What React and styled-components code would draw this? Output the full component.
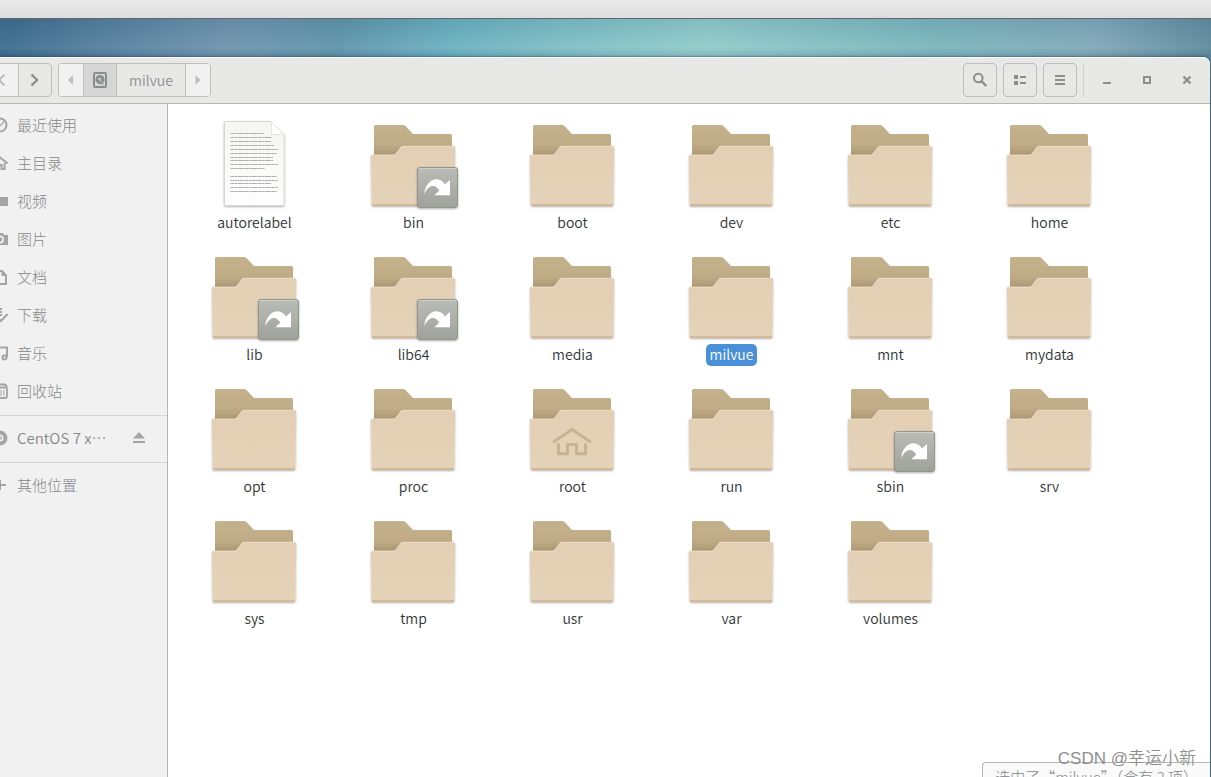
import { useState } from 'react';
import styled, { createGlobalStyle } from 'styled-components';

const GlobalStyle = createGlobalStyle`
  * {
    box-sizing: border-box;
  }

  body {
    margin: 0;
    font-family: 'Noto Sans CJK SC', 'Noto Sans', sans-serif;
    font-size: 14px;
    font-weight: 350;
    line-height: 22px;
    color: #2e3436;
  }

  button {
    padding: 0;
    border: 0;
    background: none;
    color: inherit;
    font: inherit;
  }
`;

const Desktop = styled.div`
  position: relative;
  display: flex;
  flex-direction: column;
  height: 100vh;
  overflow: hidden;
  background: #507b92;
`;

const TopPanel = styled.div`
  flex: none;
  height: 19px;
  border-bottom: 1px solid #666;
  background: linear-gradient(#e9e9e9, #dedede);
`;

const Wallpaper = styled.div`
  flex: 1;
  display: flex;
  min-height: 0;
  padding: 38px 1px 0 0;
  background:
    linear-gradient(rgba(40, 80, 120, 0.12), rgba(255, 255, 255, 0.06) 75%, rgba(30, 60, 90, 0.12)) top / 100% 38px
      no-repeat,
    linear-gradient(
        100deg,
        #396a8b,
        #557f9d 9%,
        #6e93ad 19%,
        #5e94ab 28%,
        #69b0bf 37%,
        #7cbec3 46%,
        #90cbca 58%,
        #7ab6bb 76%,
        #80a8b8 90%,
        #5d889b
      )
      top / 100% 60px no-repeat;
`;

const Window = styled.main`
  flex: 1;
  display: flex;
  flex-direction: column;
  min-width: 0;
  margin-left: -22px;
  border-radius: 0 7px 0 0;
  background: #fff;
  box-shadow: 0 0 2px 1px rgba(20, 50, 80, 0.4);
  overflow: hidden;
`;

const HeaderBar = styled.header`
  flex: none;
  display: flex;
  align-items: center;
  gap: 6px;
  height: 47px;
  padding: 0 6px;
  border-bottom: 1px solid #b6b6b3;
  background: #e8e8e7;
  box-shadow: inset 0 1px #fff;
  color: #8b8e8f;
`;

const ButtonGroup = styled.div`
  display: flex;
  height: 34px;
  border: 1px solid #bebebb;
  border-radius: 4px;
  overflow: hidden;
`;

const GroupButton = styled.button`
  display: flex;
  align-items: center;
  justify-content: center;
  width: ${(p) => p.$width};
  background: ${(p) => p.$bg || 'transparent'};
  color: ${(p) => (p.$dim ? '#bcbebd' : 'inherit')};

  & + & {
    border-left: 1px solid #bebebb;
  }
`;

const Spacer = styled.div`
  flex: 1;
`;

const ToolButton = styled.button`
  display: flex;
  align-items: center;
  justify-content: center;
  width: 34px;
  height: 34px;
  border: 1px solid #bebebb;
  border-radius: 4px;
`;

const WindowControls = styled.div`
  display: flex;
  gap: 6px;
  height: 34px;
  border-left: 1px solid #d0d0ce;
  padding-left: 6px;
`;

const ControlButton = styled.button`
  display: flex;
  align-items: center;
  justify-content: center;
  width: 34px;
`;

const Tools = styled.div`
  display: flex;
  gap: 6px;
`;

const Body = styled.div`
  flex: 1;
  display: flex;
  min-height: 0;
`;

const Sidebar = styled.nav`
  flex: none;
  width: 190px;
  padding-top: 2px;
  border-right: 1px solid #b6b6b3;
  background: #f1f1f1;
  color: #858889;
  font-size: 15px;
  font-weight: 300;
`;

const Place = styled.div`
  display: flex;
  align-items: center;
  height: 38px;
  padding: 0 20px 0 14px;

  svg {
    color: #a3a5a5;
  }
`;

const PlaceLink = styled.a`
  flex: 1;
  display: flex;
  align-items: center;
  gap: 9px;
  color: inherit;
  text-decoration: none;
`;

const DeviceName = styled.span`
  font-weight: 350;
`;

const EjectButton = styled.button`
  display: flex;
`;

const Separator = styled.hr`
  height: 1px;
  margin: 5px 0 3px;
  border: 0;
  background: #d6d6d4;
`;

const Files = styled.ul`
  flex: 1;
  display: grid;
  grid-template-columns: repeat(auto-fill, 159px);
  align-content: start;
  row-gap: 14px;
  margin: 0;
  padding: 12px 7px 0;
  list-style: none;
`;

const FileButton = styled.button`
  display: flex;
  flex-direction: column;
  align-items: center;
  width: 100%;
`;

const FileName = styled.span`
  padding: 0 4px 2px;
  border-radius: 5px;
  background: ${(p) => (p.$selected ? '#4a90d9' : 'transparent')};
  color: ${(p) => (p.$selected ? '#fff' : 'inherit')};
  line-height: 20px;
`;

const StatusBar = styled.div`
  position: absolute;
  right: 1px;
  bottom: -15px;
  padding: 3px 12px;
  border: 1px solid #b6b6b3;
  border-right: 0;
  border-radius: 4px 0 0 0;
  background: #fafafa;
  color: #858889;
  font-size: 15px;
  font-weight: 300;
  white-space: nowrap;
`;

const Watermark = styled.div`
  position: absolute;
  right: 15px;
  bottom: 6px;
  color: #8f8f8f;
  font-family: 'Liberation Sans', 'Noto Sans CJK SC', sans-serif;
  font-size: 17px;
  line-height: 24px;
`;

const Icon = ({ children, size = 16 }) => (
  <svg
    width={size}
    height={size}
    viewBox="0 0 16 16"
    fill="none"
    stroke="currentColor"
    strokeWidth="2"
    aria-hidden="true"
  >
    {children}
  </svg>
);

const fill = { fill: 'currentColor', stroke: 'none' };

const icons = {
  back: <path d="M10.5 2.5 5 8l5.5 5.5" />,
  forward: <path d="M4.5 2.5 10 8l-5.5 5.5" strokeWidth="2.4" />,
  left: <path {...fill} d="M10 3v10L5 8z" />,
  right: <path {...fill} d="M5.5 3v10l5-5z" />,
  disk: (
    <>
      <rect x="2" y="1" width="12" height="14" rx="1" />
      <circle {...fill} cx="8" cy="7.5" r="4.5" />
      <path d="m7.5 7.5 4 5" stroke="#d6d6d6" strokeWidth="1.2" />
      <circle cx="7.5" cy="7" r="1.2" fill="#d6d6d6" stroke="none" />
      <path d="m8.5 9.5 2.5 3" strokeWidth="1.4" />
    </>
  ),
  search: (
    <>
      <circle cx="6.3" cy="6" r="4.3" />
      <path d="m9.3 9 5 5" strokeWidth="2.4" />
    </>
  ),
  list: <path {...fill} d="M2 3h4v4H2zM2 9h4v4H2zM8 4h6v2H8zM8 10h6v2H8z" />,
  menu: <path {...fill} d="M3 3h10v2H3zM3 7h10v2H3zM3 11h10v2H3z" />,
  minimize: <path {...fill} d="M4 10h8v2H4z" />,
  maximize: <path d="M5 5h6v6H5z" />,
  close: <path d="m4.5 4.5 7 7m0-7-7 7" strokeWidth="2.4" />,
  recent: (
    <>
      <circle cx="8" cy="8" r="6.5" />
      <path d="M4.5 7 8 9l4-4.5" strokeWidth="1.2" />
    </>
  ),
  home: <path d="m.5 8.5 7.5-6 7.5 6M3.5 8v6h3v-4h3v4h3V8" />,
  video: <path {...fill} d="M1 4h15v9H1z" />,
  photo: (
    <>
      <path {...fill} fillRule="evenodd" d="M0 4h4l1-2h6l1 2h4v10H0zM8 4.5a4 4 0 1 0 0 8 4 4 0 0 0 0-8z" />
      <circle {...fill} cx="8" cy="8.5" r="2.2" />
    </>
  ),
  document: (
    <>
      <path d="M3 2h7l4 4.5V15H3z" strokeLinejoin="round" />
      <path {...fill} d="M9.5 2v5H14z" />
    </>
  ),
  download: <path d="M2 2h8M4 5h6M7 8h3M4 8.5l5 5.5 6.5-7" />,
  music: (
    <>
      <path d="M5 12V2.5h10V12" />
      <circle cx="4" cy="12.5" r="2" />
      <circle cx="12.5" cy="12.5" r="2" />
    </>
  ),
  trash: (
    <>
      <path d="M.5 4.5h15M4 3V1.5h9l2 2M2 5v8c0 1.5.5 2 2 2h9c1.5 0 2-.5 2-2V5" strokeWidth="1.8" />
      <path d="M6.5 7v6M9 7v6M11.8 7v6" strokeWidth="1" />
    </>
  ),
  optical: (
    <>
      <circle cx="8" cy="8" r="5.5" strokeWidth="4" />
      <circle cx="8" cy="8" r="1.5" strokeWidth="1" />
    </>
  ),
  plus: <path d="M8 3v10M2 8h12" />,
  eject: <path {...fill} d="M8 2 2 8.5h12zM2 11h12v2H2z" />,
};

const places = [
  ['recent', '最近使用'],
  ['home', '主目录'],
  ['video', '视频'],
  ['photo', '图片'],
  ['document', '文档'],
  ['download', '下载'],
  ['music', '音乐'],
  ['trash', '回收站'],
];

const files = [
  { name: 'autorelabel', type: 'text' },
  { name: 'bin', link: true },
  { name: 'boot' },
  { name: 'dev' },
  { name: 'etc' },
  { name: 'home' },
  { name: 'lib', link: true },
  { name: 'lib64', link: true },
  { name: 'media' },
  { name: 'milvue' },
  { name: 'mnt' },
  { name: 'mydata' },
  { name: 'opt' },
  { name: 'proc' },
  { name: 'root', home: true },
  { name: 'run' },
  { name: 'sbin', link: true },
  { name: 'srv' },
  { name: 'sys' },
  { name: 'tmp' },
  { name: 'usr' },
  { name: 'var' },
  { name: 'volumes' },
];

const Defs = styled.svg`
  position: absolute;
`;

// shared gradients for all the file icons
const IconDefs = () => (
  <Defs width="0" height="0" aria-hidden="true">
    <defs>
      <linearGradient id="folder-back" x1="0" y1="0" x2="0" y2="1">
        <stop offset="0" stopColor="#c4b28d" />
        <stop offset="0.6" stopColor="#bfac86" />
        <stop offset="1" stopColor="#a6936f" />
      </linearGradient>
      <linearGradient id="folder-front" x1="0" y1="0" x2="0" y2="1">
        <stop offset="0" stopColor="#e3ceb3" />
        <stop offset="1" stopColor="#e4d3b9" />
      </linearGradient>
      <linearGradient id="emblem" x1="0" y1="0" x2="0" y2="1">
        <stop offset="0" stopColor="#babdb6" />
        <stop offset="1" stopColor="#9fa29b" />
      </linearGradient>
      <linearGradient id="paper" x1="0" y1="0" x2="0" y2="1">
        <stop offset="0" stopColor="#f5f5f3" />
        <stop offset="1" stopColor="#fdfdfd" />
      </linearGradient>
      <filter id="soft" x="-10%" y="-10%" width="120%" height="125%">
        <feDropShadow dx="0" dy="1" stdDeviation="1" floodOpacity="0.3" />
      </filter>
    </defs>
  </Defs>
);

const FolderIcon = ({ link, home }) => (
  <svg width="98" height="96" viewBox="0 0 98 96" aria-hidden="true">
    <path
      fill="url(#folder-back)"
      d="M9 42V10.5Q9 9 10.5 9H38q1.5 0 2.5 1l7.5 8h37.5q1.5 0 1.5 1.5V42z"
    />
    <g filter="url(#soft)">
      <path
        fill="url(#folder-front)"
        d="M6 40q0-1.5 1.5-1.5H28q2 0 3-1.5l4.5-6q1-1.3 2.5-1.3h50.5q1.5 0 1.5 1.5L89.5 88q0 2-2 2h-79q-2 0-2-2z"
      />
      <path fill="#d0b494" d="M6.5 88.3h83q-.2 1.700-2 1.700h-79q-1.800 0-2-1.700z" />
    </g>
    <path
      d="M6.5 39.5H28q2 0 3-1.5l4.5-6q1-1.5 2.5-1.5h51"
      fill="none"
      stroke="#ecdcc7"
      strokeOpacity="0.8"
    />
    {home && (
      <g fill="none" stroke="#c9b193" strokeWidth="3" strokeLinecap="round" strokeLinejoin="round">
        <path d="M30 61.5 48 49.5l18 12" />
        <path d="M34.5 64.5v9.2h9V64.5h9v9.2h9V64.5" />
      </g>
    )}
    {link && (
      <>
        <rect
          x="52.5"
          y="51.5"
          width="40"
          height="40"
          rx="2.5"
          fill="url(#emblem)"
          stroke="#92958e"
          filter="url(#soft)"
        />
        <path d="M54 52.5h37" stroke="#cfd1cc" />
        <path
          fill="#fff"
          d="M59.3 78.5C59.5 69 66 63.3 71.5 63.3c4 0 6.500 2.200 8.300 5.200L85 64v15.3H69.300l5-4.800c-2-3-4.200-5-7-4.500-3.300.6-6.500 4-8 8.500z"
        />
      </>
    )}
  </svg>
);

// [y, right end] of each printed line
const textLines = [
  [17, 58],
  [21, 66],
  [25, 65],
  [29, 68],
  [33, 72],
  [37, 71],
  [41, 67],
  [44, 67],
  [48, 72],
  [52, 59],
  [60, 71],
  [64, 72],
  [67, 65],
  [71, 72],
  [75, 71],
];

const TextFileIcon = () => (
  <svg width="98" height="96" viewBox="0 0 98 96" aria-hidden="true">
    <path
      fill="url(#paper)"
      stroke="#d0d0ce"
      strokeWidth="0.8"
      filter="url(#soft)"
      d="M18.5 6.5q0-1 1-1H64.5L78 18.5V89q0 .5-1 .5H19q-.5 0-.5-.5z"
    />
    <path fill="#fff" stroke="#dededc" strokeWidth="0.8" d="M65.5 6v12.5H78z" />
    {textLines.map(([y, end]) => (
      <path
        key={y}
        d={`M24.5 ${y + 0.5}H${end}`}
        stroke="#b0b0b0"
        strokeDasharray="4 0.4 2.5 0.3 6 0.4"
      />
    ))}
  </svg>
);

const tools = [
  ['search', '搜索'],
  ['list', '列表'],
  ['menu', '菜单'],
];

const controls = [
  ['minimize', '最小化'],
  ['maximize', '最大化'],
  ['close', '关闭'],
];

const App = () => {
  const [selected, setSelected] = useState('milvue');

  return (
    <Desktop>
      <GlobalStyle />
      <IconDefs />
      <TopPanel />
      <Wallpaper>
        <Window>
          <HeaderBar>
            <ButtonGroup>
              <GroupButton $width="33px" $bg="#f1f1f1" $dim aria-label="后退">
                <Icon>{icons.back}</Icon>
              </GroupButton>
              <GroupButton $width="33px" aria-label="前进">
                <Icon>{icons.forward}</Icon>
              </GroupButton>
            </ButtonGroup>
            <ButtonGroup>
              <GroupButton $width="24px" $bg="#f1f1f1" $dim aria-label="向左">
                <Icon>{icons.left}</Icon>
              </GroupButton>
              <GroupButton $width="33px" $bg="#d6d6d6" aria-label="计算机">
                <Icon>{icons.disk}</Icon>
              </GroupButton>
              <GroupButton $width="69px">milvue</GroupButton>
              <GroupButton $width="25px" $bg="#f1f1f1" $dim aria-label="向右">
                <Icon>{icons.right}</Icon>
              </GroupButton>
            </ButtonGroup>
            <Spacer />
            <Tools>
              {tools.map(([icon, label]) => (
                <ToolButton key={icon} aria-label={label}>
                  <Icon>{icons[icon]}</Icon>
                </ToolButton>
              ))}
            </Tools>
            <WindowControls>
              {controls.map(([icon, label]) => (
                <ControlButton key={icon} aria-label={label}>
                  <Icon>{icons[icon]}</Icon>
                </ControlButton>
              ))}
            </WindowControls>
          </HeaderBar>
          <Body>
            <Sidebar>
              {places.map(([icon, label]) => (
                <Place key={icon}>
                  <PlaceLink href="#">
                    <Icon>{icons[icon]}</Icon>
                    {label}
                  </PlaceLink>
                </Place>
              ))}
              <Separator />
              <Place>
                <PlaceLink href="#">
                  <Icon>{icons.optical}</Icon>
                  <DeviceName lang="zh-CN">CentOS 7 x…</DeviceName>
                </PlaceLink>
                <EjectButton aria-label="弹出">
                  <Icon>{icons.eject}</Icon>
                </EjectButton>
              </Place>
              <Separator />
              <Place>
                <PlaceLink href="#">
                  <Icon>{icons.plus}</Icon>
                  其他位置
                </PlaceLink>
              </Place>
            </Sidebar>
            <Files>
              {files.map(({ name, type, link, home }) => (
                <li key={name}>
                  <FileButton onClick={() => setSelected(name)}>
                    {type === 'text' ? <TextFileIcon /> : <FolderIcon link={link} home={home} />}
                    <FileName $selected={name === selected}>{name}</FileName>
                  </FileButton>
                </li>
              ))}
            </Files>
          </Body>
        </Window>
      </Wallpaper>
      <StatusBar>选中了“milvue”（含有 2 项）</StatusBar>
      <Watermark>CSDN @幸运小新</Watermark>
    </Desktop>
  );
};

export default App;
